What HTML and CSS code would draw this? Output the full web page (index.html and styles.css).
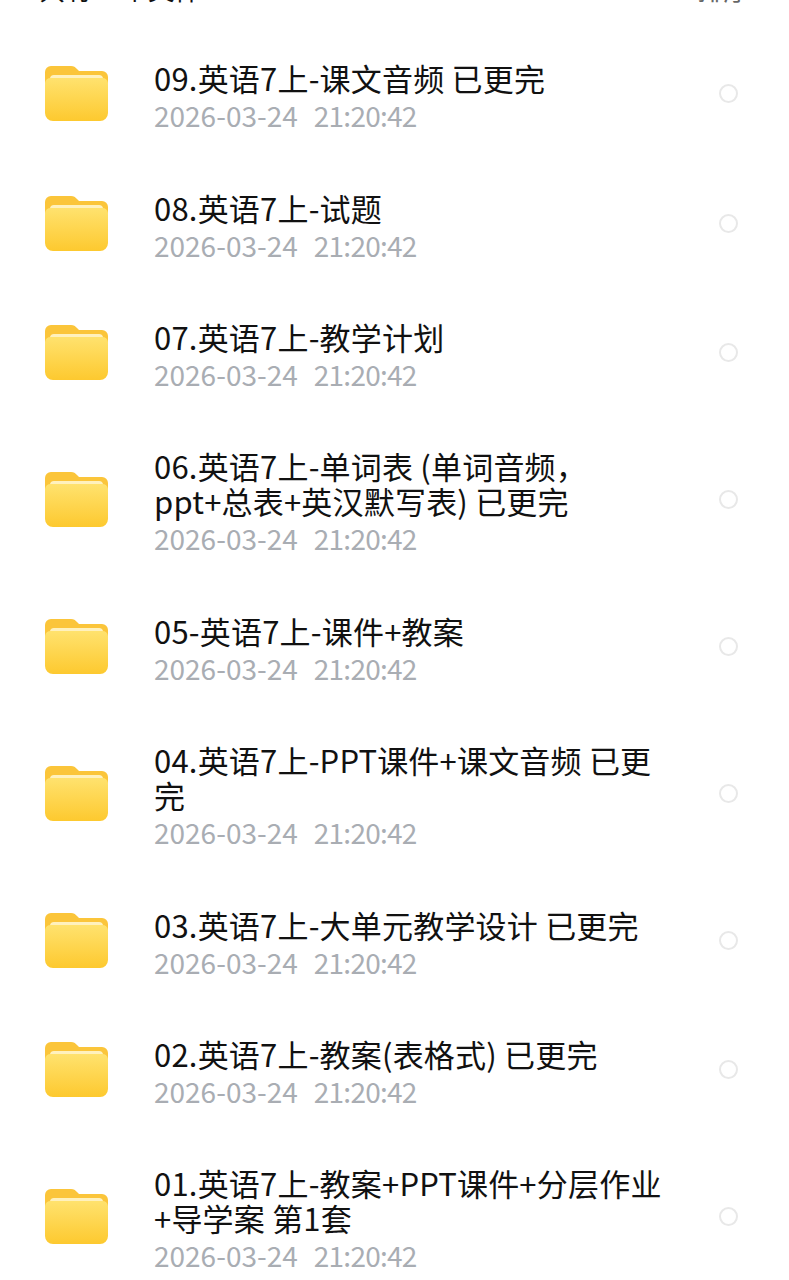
FILE: index.html
```html
<!DOCTYPE html>
<html>
<head>
    <title>文件列表</title>
    <link rel="stylesheet" href="styles.css">
</head>
<body>
    <svg class="defs" width="0" height="0">
        <defs>
            <linearGradient id="folderFront" x1="0" y1="0" x2="0" y2="1">
                <stop offset="0" stop-color="#ffe26e"/>
                <stop offset="1" stop-color="#fdc92f"/>
            </linearGradient>
            <symbol id="folder" viewBox="0 0 63 55">
                <path d="M0 6a6 6 0 0 1 6-6h20c3 0 4 1 6 3l2 2h23a6 6 0 0 1 6 6v14H0z" fill="#fbc53a"/>
                <path d="M5 12a4 4 0 0 1 4-3h45a4 4 0 0 1 4 3v4H5z" fill="#fff1bd"/>
                <path d="M0 17a6 6 0 0 1 6-5h51a6 6 0 0 1 6 5v30a8 8 0 0 1-8 8H8a8 8 0 0 1-8-8z" fill="url(#folderFront)"/>
            </symbol>
        </defs>
    </svg>

    <div class="top-bar">
        <span class="count">共有10个文件</span>
        <span class="sort">排序</span>
    </div>

    <ul class="file-list">
        <li class="file-row">
            <svg class="folder"><use href="#folder"/></svg>
            <div class="file-info">
                <div class="file-name">09.英语7上-课文音频 已更完</div>
                <div class="file-date">2026-03-24<span class="time">21:20:42</span></div>
            </div>
            <span class="radio"></span>
        </li>
        <li class="file-row">
            <svg class="folder"><use href="#folder"/></svg>
            <div class="file-info">
                <div class="file-name">08.英语7上-试题</div>
                <div class="file-date">2026-03-24<span class="time">21:20:42</span></div>
            </div>
            <span class="radio"></span>
        </li>
        <li class="file-row">
            <svg class="folder"><use href="#folder"/></svg>
            <div class="file-info">
                <div class="file-name">07.英语7上-教学计划</div>
                <div class="file-date">2026-03-24<span class="time">21:20:42</span></div>
            </div>
            <span class="radio"></span>
        </li>
        <li class="file-row">
            <svg class="folder"><use href="#folder"/></svg>
            <div class="file-info">
                <div class="file-name">06.英语7上-单词表 (单词音频，<br>ppt+总表+英汉默写表) 已更完</div>
                <div class="file-date">2026-03-24<span class="time">21:20:42</span></div>
            </div>
            <span class="radio"></span>
        </li>
        <li class="file-row">
            <svg class="folder"><use href="#folder"/></svg>
            <div class="file-info">
                <div class="file-name">05-英语7上-课件+教案</div>
                <div class="file-date">2026-03-24<span class="time">21:20:42</span></div>
            </div>
            <span class="radio"></span>
        </li>
        <li class="file-row">
            <svg class="folder"><use href="#folder"/></svg>
            <div class="file-info">
                <div class="file-name">04.英语7上-PPT课件+课文音频 已更<br>完</div>
                <div class="file-date">2026-03-24<span class="time">21:20:42</span></div>
            </div>
            <span class="radio"></span>
        </li>
        <li class="file-row">
            <svg class="folder"><use href="#folder"/></svg>
            <div class="file-info">
                <div class="file-name">03.英语7上-大单元教学设计 已更完</div>
                <div class="file-date">2026-03-24<span class="time">21:20:42</span></div>
            </div>
            <span class="radio"></span>
        </li>
        <li class="file-row">
            <svg class="folder"><use href="#folder"/></svg>
            <div class="file-info">
                <div class="file-name">02.英语7上-教案(表格式) 已更完</div>
                <div class="file-date">2026-03-24<span class="time">21:20:42</span></div>
            </div>
            <span class="radio"></span>
        </li>
        <li class="file-row">
            <svg class="folder"><use href="#folder"/></svg>
            <div class="file-info">
                <div class="file-name">01.英语7上-教案+PPT课件+分层作业<br>+导学案 第1套</div>
                <div class="file-date">2026-03-24<span class="time">21:20:42</span></div>
            </div>
            <span class="radio"></span>
        </li>
    </ul>
</body>
</html>
```

FILE: styles.css
```css
html, body {
    height: 1280px;
    overflow: hidden;
}

body {
    margin: 0;
    background: #ffffff;
    color: #111111;
    font-family: "Noto Sans CJK SC", "Noto Sans", sans-serif;
}

.defs {
    display: block;
    height: 0;
}

.top-bar {
    display: flex;
    justify-content: space-between;
    align-items: flex-end;
    height: 5px;
    padding: 0 39px;
    overflow: hidden;
    font-size: 26.5px;
    line-height: 32px;
}

.sort {
    color: #666666;
}

.file-list {
    list-style: none;
    margin: 24px 0 0;
    padding: 0;
}

.file-row {
    display: flex;
    align-items: center;
    padding: 25.3px 51px 25.1px 45px;
}

.folder {
    width: 63px;
    height: 55px;
    flex-shrink: 0;
}

.file-info {
    flex: 1;
    margin-left: 46px;
    padding-top: 6px;
}

.file-name {
    font-size: 31px;
    line-height: 35px;
    letter-spacing: 0.2px;
    color: #111111;
}

.file-date {
    margin-top: 3px;
    font-size: 28px;
    line-height: 35px;
    color: #a9adb3;
}

.time {
    margin-left: 16px;
    letter-spacing: -0.75px;
}

.radio {
    width: 15px;
    height: 15px;
    flex-shrink: 0;
    border: 2px solid #e8e8e8;
    border-radius: 50%;
}
```
